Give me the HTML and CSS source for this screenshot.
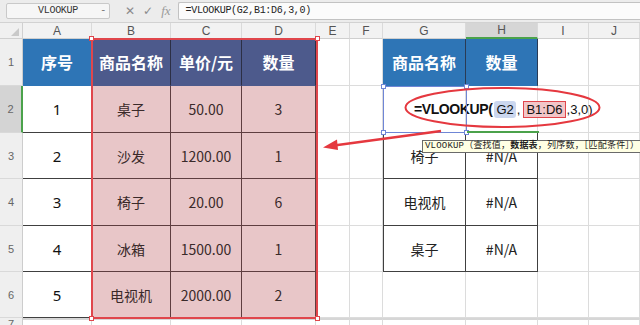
FILE: index.html
```html
<!DOCTYPE html>
<html lang="zh-CN">
<head>
    <meta charset="UTF-8">
    <title>VLOOKUP</title>
    <link rel="stylesheet" href="styles.css">
</head>
<body>
    <div class="fbar">
        <div class="namebox">VLOOKUP<span class="drop">-</span></div>
        <div class="ficons">
            <span class="fi">&#x2715;</span>
            <span class="fi">&#x2713;</span>
            <span class="fi fx">fx</span>
        </div>
        <div class="finput">=VLOOKUP(G2,B1:D6,3,0)</div>
    </div>

    <div class="sheet">
        <!-- column headers -->
        <div class="corner"></div>
        <div class="ch">A</div>
        <div class="ch">B</div>
        <div class="ch">C</div>
        <div class="ch">D</div>
        <div class="ch">E</div>
        <div class="ch">F</div>
        <div class="ch">G</div>
        <div class="ch ch-on">H</div>
        <div class="ch">I</div>
        <div class="ch">J</div>

        <!-- row 1 -->
        <div class="rh">1</div>
        <div class="c hd blue">序号</div>
        <div class="c hd slate">商品名称</div>
        <div class="c hd slate">单价/元</div>
        <div class="c hd slate">数量</div>
        <div class="c"></div>
        <div class="c"></div>
        <div class="c hd blue">商品名称</div>
        <div class="c hd blue">数量</div>
        <div class="c"></div>
        <div class="c"></div>

        <!-- row 2 -->
        <div class="rh rh-on">2</div>
        <div class="c t num">1</div>
        <div class="c t pink">桌子</div>
        <div class="c t pink">50.00</div>
        <div class="c t pink">3</div>
        <div class="c"></div>
        <div class="c"></div>
        <div class="c edit">
            <span class="fx-bold">=VLOOKUP(</span><span class="ref-g">G2</span>,<span class="ref-b">B1:D6</span>,3,0)
        </div>
        <div class="c clear"></div>
        <div class="c"></div>
        <div class="c"></div>

        <!-- row 3 -->
        <div class="rh">3</div>
        <div class="c t num">2</div>
        <div class="c t pink">沙发</div>
        <div class="c t pink">1200.00</div>
        <div class="c t pink">1</div>
        <div class="c"></div>
        <div class="c"></div>
        <div class="c t tl">椅子</div>
        <div class="c t">#N/A</div>
        <div class="c"></div>
        <div class="c"></div>

        <!-- row 4 -->
        <div class="rh">4</div>
        <div class="c t num">3</div>
        <div class="c t pink">椅子</div>
        <div class="c t pink">20.00</div>
        <div class="c t pink">6</div>
        <div class="c"></div>
        <div class="c"></div>
        <div class="c t tl">电视机</div>
        <div class="c t">#N/A</div>
        <div class="c"></div>
        <div class="c"></div>

        <!-- row 5 -->
        <div class="rh">5</div>
        <div class="c t num">4</div>
        <div class="c t pink">冰箱</div>
        <div class="c t pink">1500.00</div>
        <div class="c t pink">1</div>
        <div class="c"></div>
        <div class="c"></div>
        <div class="c t tl">桌子</div>
        <div class="c t">#N/A</div>
        <div class="c"></div>
        <div class="c"></div>

        <!-- row 6 -->
        <div class="rh">6</div>
        <div class="c t num">5</div>
        <div class="c t pink">电视机</div>
        <div class="c t pink">2000.00</div>
        <div class="c t pink">2</div>
        <div class="c"></div>
        <div class="c"></div>
        <div class="c"></div>
        <div class="c"></div>
        <div class="c"></div>
        <div class="c"></div>

        <!-- row 7 (cut off) -->
        <div class="rh rh-cut">7</div>
        <div class="c last"></div>
        <div class="c last"></div>
        <div class="c last"></div>
        <div class="c last"></div>
        <div class="c last"></div>
        <div class="c last"></div>
        <div class="c last"></div>
        <div class="c last"></div>
        <div class="c last"></div>
        <div class="c last"></div>

        <!-- overlays -->
        <div class="range">
            <span class="h h1"></span><span class="h h2"></span>
            <span class="h h3"></span><span class="h h4"></span>
        </div>
        <div class="sel">
            <span class="h s1"></span><span class="h s2"></span>
            <span class="h s3"></span><span class="h s4"></span>
        </div>
        <div class="hsel"></div>
        <svg class="marks" width="640" height="302" viewBox="0 0 640 302">
            <ellipse cx="502.5" cy="84.5" rx="97" ry="19.5" fill="none" stroke="#e5383f" stroke-width="2"/>
            <line x1="441" y1="108" x2="334" y2="122.5" stroke="#e5383f" stroke-width="2.5"/>
            <polygon points="323,124.5 337,116.5 338,127" fill="#e5383f"/>
        </svg>
        <div class="tip">VLOOKUP（查找值，<b>数据表</b>，列序数，［匹配条件］）</div>
    </div>
</body>
</html>
```

FILE: styles.css
```css
* {
    box-sizing: border-box;
    margin: 0;
    padding: 0;
}
body {
    width: 640px;
    height: 325px;
    overflow: hidden;
    background: #fff;
    font-family: "Noto Sans CJK SC", "Liberation Sans", sans-serif;
}

/* formula bar */
.fbar {
    height: 23px;
    background: #ececec;
    border-bottom: 1px solid #d2d2d2;
    display: flex;
    align-items: center;
    padding-left: 6px;
}
.namebox {
    position: relative;
    width: 104px;
    height: 16px;
    background: #f6f6f6;
    border: 1px solid #c9c9c9;
    border-radius: 2px;
    font: 10px "Liberation Mono", "Noto Sans CJK SC", monospace;
    letter-spacing: -0.3px;
    color: #333;
    text-align: center;
    line-height: 14px;
}
.drop {
    position: absolute;
    right: 3px;
    top: 0;
    color: #777;
}
.ficons {
    display: flex;
    align-items: center;
    gap: 8px;
    padding: 0 7px 0 15px;
}
.fi {
    color: #8a8a8a;
    font: 12px "DejaVu Sans", sans-serif;
}
.fx {
    font: italic 13px "Liberation Serif", serif;
    color: #9a9a9a;
}
.finput {
    flex: 1;
    height: 18px;
    background: #fbfbfb;
    border: 1px solid #c2c2c2;
    border-right: none;
    border-radius: 2px 0 0 2px;
    font: 10px "Liberation Mono", "Noto Sans CJK SC", monospace;
    letter-spacing: -0.3px;
    color: #222;
    line-height: 16px;
    padding-left: 7px;
}

/* grid */
.sheet {
    position: relative;
    display: grid;
    grid-template-columns: 23px 69px 79px 71px 74px 34px 33px 83px 72px 51px 51px;
    grid-template-rows: 16px 47px 47px 46px 47px 46px 46px 8px;
}
.corner {
    background: #f0f0f0;
    border-right: 1px solid #d0d0d0;
    border-bottom: 1px solid #cfcfcf;
    position: relative;
}
.corner::after {
    content: "";
    position: absolute;
    right: 3px;
    bottom: 2px;
    border-left: 8px solid transparent;
    border-bottom: 8px solid #c9c9c9;
}
.ch {
    background: #f2f2f2;
    border-right: 1px solid #dadada;
    border-bottom: 1px solid #cfcfcf;
    color: #555;
    font: 12px "Liberation Sans", sans-serif;
    display: flex;
    align-items: center;
    justify-content: center;
}
.ch-on {
    background: #d6d6d6;
    border-bottom: 2px solid #4ba24b;
}
.rh {
    background: #efefef;
    border-right: 1px solid #cdcdcd;
    border-bottom: 1px solid #d9d9d9;
    color: #666;
    font: 11px "Liberation Sans", sans-serif;
    display: flex;
    align-items: center;
    justify-content: center;
}
.rh-on {
    background: #d4d4d4;
    border-right: 2px solid #4ba24b;
}
.rh-cut {
    align-items: flex-start;
    line-height: 7px;
    overflow: hidden;
    padding-top: 3px;
}
.c {
    border-right: 1px solid #dcdcdc;
    border-bottom: 1px solid #dcdcdc;
    display: flex;
    align-items: center;
    justify-content: center;
    font-size: 14px;
    color: #222;
}
.c.last {
    border-top: 2px solid #d6d6d6;
}
.hd {
    color: #fff;
    font-weight: bold;
    font-size: 16px;
}
.blue {
    background: #2e75b6;
    border-right-color: #2a3b55;
    border-bottom-color: #2e75b6;
}
.slate {
    background: #4d5a8c;
    border-right-color: #2c2f45;
    border-bottom-color: #4d5a8c;
}
.t {
    border-right-color: #404040;
    border-bottom-color: #404040;
}
.tl {
    border-left: 1px solid #404040;
}
.num {
    font-family: "Noto Sans", sans-serif;
    font-size: 15px;
    color: #111;
}
.pink {
    background: #e8c6c8;
    border-right-color: #5e3e40;
    border-bottom-color: #5e3e40;
    color: #3a2a2a;
    font-size: 14px;
}

/* cell being edited */
.edit {
    position: relative;
    z-index: 1;
    justify-content: flex-start;
    padding-left: 31px;
    white-space: nowrap;
    font-family: "Liberation Sans", sans-serif;
    font-size: 13px;
    color: #111;
}
.fx-bold {
    font-weight: bold;
    font-size: 14px;
    letter-spacing: -0.4px;
    margin-right: 2px;
}
.ref-g {
    background: #cbd7ef;
    border-radius: 3px;
    padding: 1px 2px;
    margin-right: 1px;
}
.ref-b {
    background: #f2c6c8;
    border: 1px solid #e0464c;
    padding: 0 2px;
    margin: 0 1px 0 3px;
}
.clear {
    background: transparent;
}

/* overlays */
.range {
    position: absolute;
    left: 91px;
    top: 15px;
    width: 227px;
    height: 281px;
    border: 2.5px solid #e0464c;
}
.h {
    position: absolute;
    width: 5px;
    height: 5px;
    background: #fff;
    border: 1px solid #e0464c;
}
.h1 { left: -4px; top: -4px; }
.h2 { right: -4px; top: -4px; }
.h3 { left: -4px; bottom: -4px; }
.h4 { right: -4px; bottom: -4px; }
.sel {
    position: absolute;
    left: 383px;
    top: 63px;
    width: 84px;
    height: 47px;
    border: 1.5px solid #6f86d6;
    z-index: 2;
}
.sel .h {
    border-color: #6f86d6;
    width: 5px;
    height: 5px;
}
.s1 { left: -3px; top: -3px; }
.s2 { right: -3px; top: -3px; }
.s3 { left: -3px; bottom: -3px; }
.s4 { right: -3px; bottom: -3px; }
.hsel {
    position: absolute;
    left: 467px;
    top: 108px;
    width: 72px;
    height: 2px;
    background: #4ba24b;
    z-index: 2;
}
.marks {
    position: absolute;
    left: 0;
    top: 0;
    z-index: 3;
    pointer-events: none;
}
.tip {
    position: absolute;
    left: 422px;
    top: 117px;
    height: 13px;
    padding: 0 2px;
    background: #ffffe4;
    border: 1px solid #6a6a6a;
    font: 9px "Liberation Mono", "Noto Sans CJK SC", monospace;
    letter-spacing: 0.2px;
    line-height: 11px;
    color: #222;
    white-space: nowrap;
    z-index: 4;
}
.tip b {
    font-weight: bold;
}
```
